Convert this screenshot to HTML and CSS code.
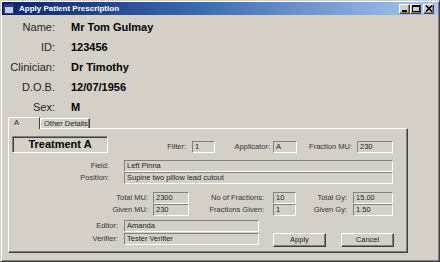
FILE: index.html
```html
<!DOCTYPE html>
<html>
<head>
<meta charset="utf-8">
<link rel="stylesheet" href="styles.css">
</head>
<body>
<div class="window">
  <div class="titlebar">
    <svg class="appicon" width="10" height="10" viewBox="0 0 10 10">
      <rect x="0.5" y="0.5" width="9" height="9" fill="#c9c8e6" stroke="#3a3a7a"/>
      <rect x="1" y="1" width="8" height="2" fill="#2a3a8c"/>
    </svg>
    <span class="title">Apply Patient Prescription</span>
    <div class="ctrls">
      <span class="cbtn"><svg width="8" height="7" viewBox="0 0 8 7"><rect x="1" y="5" width="5" height="2" fill="#000"/></svg></span>
      <span class="cbtn"><svg width="8" height="7" viewBox="0 0 8 7"><rect x="0.5" y="0.5" width="7" height="6" fill="none" stroke="#000"/><rect x="0" y="0" width="8" height="2" fill="#000"/></svg></span>
      <span class="cbtn close"><svg width="8" height="7" viewBox="0 0 8 7"><path d="M1 0.5 L7 6.5 M7 0.5 L1 6.5" stroke="#000" stroke-width="1.6"/></svg></span>
    </div>
  </div>

  <div class="patient">
    <div class="plabel">Name:</div><div class="pval">Mr Tom Gulmay</div>
    <div class="plabel">ID:</div><div class="pval">123456</div>
    <div class="plabel">Clinician:</div><div class="pval">Dr Timothy</div>
    <div class="plabel">D.O.B.</div><div class="pval">12/07/1956</div>
    <div class="plabel">Sex:</div><div class="pval">M</div>
  </div>

  <div class="tabs">
    <div class="tab tab-active">A</div>
    <div class="tab tab-other">Other Details</div>
  </div>

  <div class="panel">
    <div class="row-a">
      <div class="treat">Treatment A</div>
      <span class="lbl la-filter">Filter:</span><div class="fld w23">1</div>
      <span class="lbl la-app">Applicator:</span><div class="fld w24">A</div>
      <span class="lbl la-frac">Fraction MU:</span><div class="fld w36">230</div>
    </div>

    <div class="row-b">
      <span class="lbl">Field:</span><div class="fld">Left Pinna</div>
      <span class="lbl">Position:</span><div class="fld">Supine two pillow lead cutout</div>
    </div>

    <div class="row-c">
      <span class="lbl">Total MU:</span><div class="fld">2300</div>
      <span class="lbl">No of Fractions:</span><div class="fld">10</div>
      <span class="lbl">Total Gy:</span><div class="fld">15.00</div>
      <span class="lbl">Given MU:</span><div class="fld">230</div>
      <span class="lbl">Fractions Given:</span><div class="fld">1</div>
      <span class="lbl">Given Gy:</span><div class="fld">1.50</div>
    </div>

    <div class="row-d">
      <div class="people">
        <span class="lbl">Editor:</span><div class="fld">Amanda</div>
        <span class="lbl">Verifier:</span><div class="fld">Tester Verifier</div>
      </div>
      <div class="buttons">
        <div class="btn">Apply</div>
        <div class="btn">Cancel</div>
      </div>
    </div>
  </div>
</div>
</body>
</html>
```

FILE: styles.css
```css
* { box-sizing: border-box; }
html, body { margin: 0; padding: 0; background: #d4d0c8; }
body { font-family: "Liberation Sans", Arial, sans-serif; }

.window {
  width: 440px;
  height: 262px;
  background: #d4d0c8;
  border: 1px solid;
  border-color: #d4d0c8 #404040 #404040 #d4d0c8;
  box-shadow: inset 1px 1px #ffffff, inset -1px -1px #808080;
  padding: 1px;
  overflow: hidden;
}

.titlebar {
  height: 13px;
  display: flex;
  align-items: center;
  background: linear-gradient(to right, #0a246a 0%, #3a6ab0 45%, #a6caf0 100%);
  padding-left: 2px;
}
.appicon { display: block; flex: none; }
.title {
  margin-left: 5px;
  color: #ffffff;
  font-weight: bold;
  font-size: 8px;
  line-height: 13px;
  white-space: nowrap;
}
.ctrls {
  margin-left: auto;
  margin-right: 4px;
  display: flex;
  gap: 0;
}
.cbtn {
  width: 11px;
  height: 10px;
  background: #d4d0c8;
  border: 1px solid;
  border-color: #ffffff #404040 #404040 #ffffff;
  box-shadow: inset -1px -1px #808080;
  display: flex;
  align-items: center;
  justify-content: center;
}
.cbtn svg { display: block; }
.cbtn.close { margin-left: 2px; }

.patient {
  margin-top: 2px;
  display: grid;
  grid-template-columns: 53px auto;
  column-gap: 16px;
  grid-auto-rows: 20px;
  align-items: center;
  font-size: 11px;
}
.plabel { text-align: right; color: #1e1e1e; }
.pval { font-weight: bold; color: #000; }

.tabs {
  height: 11px;
  margin-left: 6px;
  display: flex;
  align-items: flex-end;
  font-size: 7.5px;
  color: #222;
}
.tab {
  border: 1px solid;
  border-color: #ffffff #404040 #d4d0c8 #ffffff;
  border-bottom: none;
  background: #d4d0c8;
  line-height: 9px;
}
.tab-active {
  width: 32px;
  height: 12px;
  padding-left: 5px;
  margin-bottom: -1px;
  position: relative;
  z-index: 1;
}
.tab-other {
  width: 50px;
  height: 10px;
  padding-left: 3px;
  box-shadow: inset -1px 0 #808080;
}

.panel {
  margin-left: 6px;
  width: 400px;
  height: 125px;
  border: 1px solid;
  border-color: #ffffff #404040 #404040 #ffffff;
  box-shadow: inset -1px -1px #808080;
  font-size: 7.5px;
  color: #2a2a2a;
}

.lbl {
  text-align: right;
  white-space: nowrap;
  line-height: 12px;
  color: #333;
}
.fld {
  height: 12px;
  border: 1px solid;
  border-color: #808080 #ffffff #ffffff #808080;
  background: #d4d0c8;
  padding-left: 2px;
  line-height: 10px;
  white-space: nowrap;
  overflow: hidden;
  color: #222;
}
.w23 { width: 23px; }
.w24 { width: 24px; }
.w36 { width: 36px; }

.row-a {
  margin-top: 7px;
  display: flex;
  align-items: flex-end;
}
.treat {
  margin-left: 3px;
  width: 96px;
  height: 17px;
  border: 1px solid;
  border-color: #808080 #ffffff #ffffff #808080;
  box-shadow: inset 1px 1px #404040;
  text-align: center;
  font-size: 11px;
  font-weight: bold;
  line-height: 15px;
  color: #000;
}
.la-filter { width: 84px; padding-right: 6px; }
.la-app { width: 58px; padding-right: 3px; }
.la-frac { width: 60px; padding-right: 5px; }

.row-b {
  margin-top: 7px;
  display: grid;
  grid-template-columns: 100px 269px;
  column-gap: 15px;
  grid-auto-rows: 12px;
}

.row-c {
  margin-top: 8px;
  display: grid;
  grid-template-columns: 144px 36px 84px 23px 57px 40px;
  grid-auto-rows: 12px;
}
.row-c .lbl:nth-of-type(1), .row-c .lbl:nth-of-type(4) { padding-right: 5px; }
.row-c .lbl:nth-of-type(2), .row-c .lbl:nth-of-type(5) { padding-right: 9px; }
.row-c .lbl:nth-of-type(3), .row-c .lbl:nth-of-type(6) { padding-right: 6px; }

.row-d {
  margin-top: 4px;
  display: flex;
  align-items: flex-start;
}
.people {
  display: grid;
  grid-template-columns: 115px 135px;
  grid-template-rows: 12px 13px;
  align-items: end;
}
.people .lbl { padding-right: 6px; }
.buttons {
  margin-left: 14px;
  margin-top: 13px;
  display: flex;
  gap: 15px;
}
.btn {
  width: 53px;
  height: 14px;
  border: 1px solid;
  border-color: #ffffff #404040 #404040 #ffffff;
  box-shadow: inset -1px -1px #808080;
  text-align: center;
  line-height: 12px;
  color: #222;
}
```
